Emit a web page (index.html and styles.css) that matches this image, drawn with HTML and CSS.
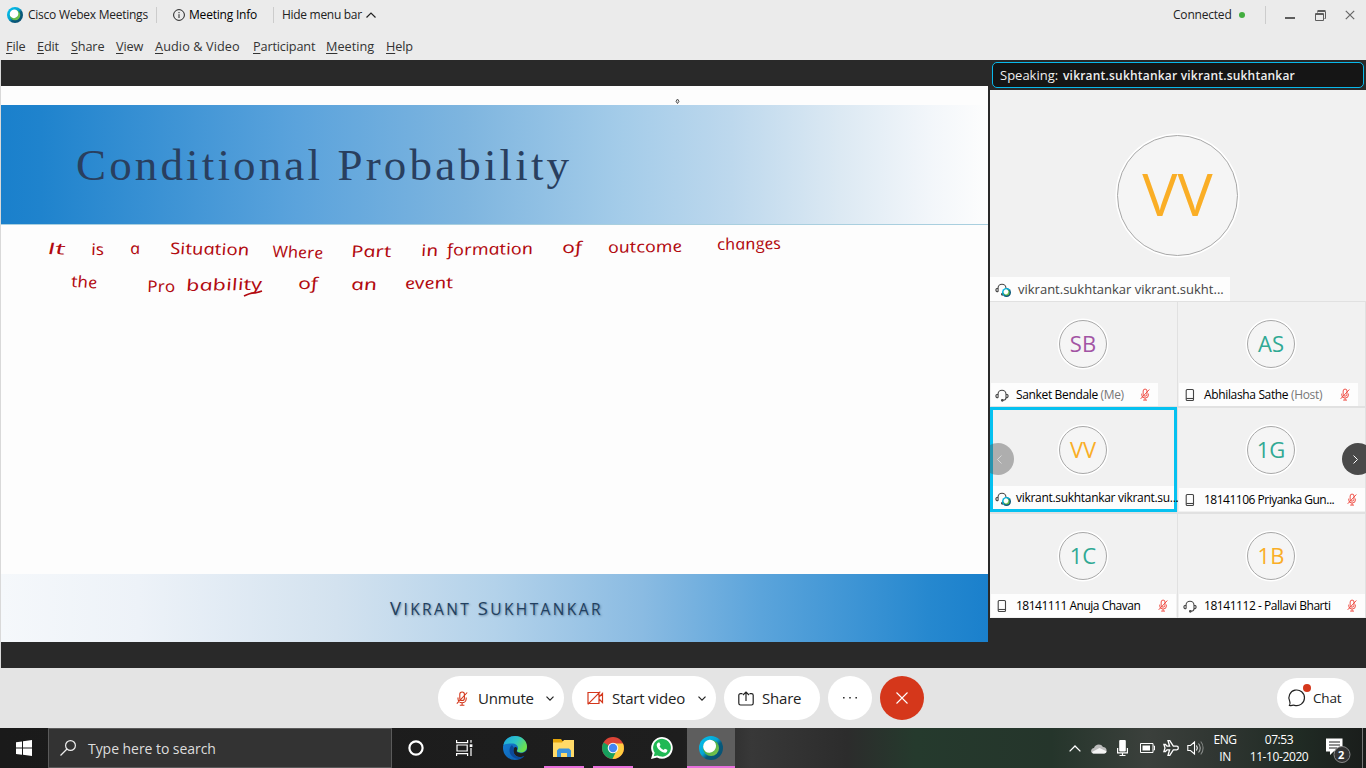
FILE: index.html
```html
<!DOCTYPE html>
<html lang="en">
<head>
<meta charset="utf-8">
<title>Cisco Webex Meetings</title>
<link rel="stylesheet" href="styles.css">
</head>
<body>
<svg class="defs" width="0" height="0" aria-hidden="true">
  <linearGradient id="ringA" x1="0" y1="0" x2="1" y2="1"><stop offset="0" stop-color="#00c4f2"/><stop offset=".45" stop-color="#07a5d3"/><stop offset=".6" stop-color="#075a7c"/><stop offset="1" stop-color="#0b4f70"/></linearGradient>
  <linearGradient id="ringB" x1="0" y1="0" x2="1" y2="1"><stop offset=".3" stop-color="#35a84a"/><stop offset="1" stop-color="#8ccb4b"/></linearGradient>
  <linearGradient id="edgeA" x1="0" y1="0" x2="1" y2=".5"><stop offset="0" stop-color="#1ba5e0"/><stop offset=".55" stop-color="#2fc4c6"/><stop offset="1" stop-color="#6be04e"/></linearGradient>
  <linearGradient id="edgeB" x1="0" y1="0" x2="1" y2="1"><stop offset="0" stop-color="#1683d8"/><stop offset="1" stop-color="#0b58a8"/></linearGradient>
  <symbol id="webex" viewBox="0 0 24 24"><circle cx="12" cy="12" r="12" fill="url(#ringA)"/><circle cx="12" cy="12" r="8" fill="url(#ringB)"/><ellipse cx="10.6" cy="10.2" rx="6.7" ry="6.3" transform="rotate(-48 10.6 10.2)" fill="#fff"/></symbol>
  <symbol id="mic-off" viewBox="0 0 12 15"><g fill="none" stroke="currentColor" stroke-width="1.1"><rect x="3.8" y="1" width="4.6" height="8.5" rx="2.3"/><path d="M2 6.5v1.2a4.1 4.1 0 0 0 8.200 0V6.500M6.100 12v2M3.800 14.200h4.600M.8 12.700 11.200 1.500"/></g></symbol>
  <symbol id="phone" viewBox="0 0 10 14"><g fill="none" stroke="currentColor" stroke-width="1.100"><rect x="1.200" y="1.500" width="7.300" height="11" rx="1"/><path d="M1.200 10.500h7.300"/></g></symbol>
  <symbol id="headset" viewBox="0 0 14 14"><g fill="none" stroke="currentColor" stroke-width="1.100"><path d="M3.100 9.800V6.300a3.900 3.900 0 0 1-.1 0 4 4 0 0 1 8 0v3.500M3 6.200C1.200 6.200.9 7.300.9 8s.4 1.800 2.100 1.800M11 6.200c1.800 0 2.100 1.100 2.100 1.800s-.4 1.800-2.100 1.800c0 1.500-1 2.500-3 2.500"/><circle cx="7.300" cy="12.300" r=".8" fill="currentColor"/></g></symbol>
</svg>

<header class="top">
  <div class="titlebar">
    <svg class="logo"><use href="#webex"/></svg>
    <span class="t-app">Cisco Webex Meetings</span>
    <i class="sep sep-a"></i>
    <svg class="info" viewBox="0 0 12 12" fill="none" stroke="#222"><circle cx="6" cy="6" r="5.400"/><path d="M6 5.200V9M6 3v1.200"/></svg>
    <span class="t-info">Meeting Info</span>
    <i class="sep sep-b"></i>
    <span class="t-hide">Hide menu bar</span>
    <svg class="caret" viewBox="0 0 10 6" fill="none" stroke="#222" stroke-width="1.200"><path d="m.5 5.500 4.500-4.500 4.500 4.500"/></svg>
    <div class="status"><span class="t-conn">Connected</span><i class="dot"></i><i class="sep sep-c"></i>
      <svg class="wmin" viewBox="0 0 10 2"><path d="M0 1h10" stroke="#5d5d5d" stroke-width="2"/></svg>
      <svg class="wmax" viewBox="0 0 11 11" fill="none" stroke="#5d5d5d"><path d="M.5 3.500h8v7h-8zM.5 4.500h8M2.500 2.500v-1h8v7h-1M2.500.5h8"/></svg>
      <svg class="wclose" viewBox="0 0 10 10" stroke="#666" stroke-width="1.200"><path d="m.8.8 8.400 8.400M9.200.8.8 9.200"/></svg>
    </div>
  </div>
  <nav class="menu">
    <span class="m1"><u>F</u>ile</span><span class="m2"><u>E</u>dit</span><span class="m3"><u>S</u>hare</span><span class="m4"><u>V</u>iew</span><span class="m5"><u>A</u>udio &amp; Video</span><span class="m6"><u>P</u>articipant</span><span class="m7"><u>M</u>eeting</span><span class="m8"><u>H</u>elp</span>
  </nav>
</header>

<main class="stage">
  <section class="slide">
    <div class="slide-top"><svg class="pointer" viewBox="0 0 5 7" fill="#ddd" stroke="#555"><path d="m2.500 1 1.500 2.300-1.500 2.300L1 3.300z"/></svg></div>
    <div class="banner"><h1>Conditional Probability</h1></div>
    <svg class="notes" viewBox="1 225 987 349">
      <text transform="translate(48 254) rotate(2) skewX(12)" textLength="18" lengthAdjust="spacingAndGlyphs">It</text>
      <text transform="translate(92 255) skewX(12)" textLength="13" lengthAdjust="spacingAndGlyphs">is</text>
      <text transform="translate(131 254) skewX(12)" textLength="10" lengthAdjust="spacingAndGlyphs">a</text>
      <text transform="translate(171 254) rotate(1) skewX(12)" textLength="79" lengthAdjust="spacingAndGlyphs">Situation</text>
      <text transform="translate(273 257) rotate(2) skewX(12)" textLength="51" lengthAdjust="spacingAndGlyphs">Where</text>
      <text transform="translate(352 257) skewX(12)" textLength="40" lengthAdjust="spacingAndGlyphs">Part</text>
      <text transform="translate(422 256) skewX(12)" textLength="17" lengthAdjust="spacingAndGlyphs">in</text>
      <text transform="translate(448 255.500) rotate(-1) skewX(12)" textLength="86" lengthAdjust="spacingAndGlyphs">formation</text>
      <text transform="translate(563 253) skewX(12)" textLength="20" lengthAdjust="spacingAndGlyphs">of</text>
      <text transform="translate(609 253) rotate(-1) skewX(12)" textLength="74" lengthAdjust="spacingAndGlyphs">outcome</text>
      <text transform="translate(718 250) rotate(-1) skewX(12)" textLength="64" lengthAdjust="spacingAndGlyphs">changes</text>
      <text transform="translate(72 287) rotate(3) skewX(12)" textLength="26" lengthAdjust="spacingAndGlyphs">the</text>
      <text transform="translate(148 292) skewX(12)" textLength="28" lengthAdjust="spacingAndGlyphs">Pro</text>
      <text transform="translate(187 291) rotate(-1) skewX(12)" textLength="76" lengthAdjust="spacingAndGlyphs">bability</text>
      <text transform="translate(299 289) skewX(12)" textLength="20" lengthAdjust="spacingAndGlyphs">of</text>
      <text transform="translate(352 290) skewX(12)" textLength="26" lengthAdjust="spacingAndGlyphs">an</text>
      <text transform="translate(406 289) rotate(-1) skewX(12)" textLength="48" lengthAdjust="spacingAndGlyphs">event</text>
      <path d="M244 296c4-2 6-3 10-3 2 0 5-1 8-2"/>
    </svg>
    <div class="footer"><b>V</b>ikrant&nbsp;<b>S</b>ukhtankar</div>
  </section>

  <aside class="people">
    <div class="speaking"><span class="sp-a">Speaking:</span><b>vikrant.sukhtankar vikrant.sukhtankar</b></div>
    <div class="main-tile">
      <div class="avatar big gold">VV</div>
      <div class="label main-label"><span class="dev"><svg class="hs"><use href="#headset"/></svg><svg class="badge"><use href="#webex"/></svg></span><span>vikrant.sukhtankar vikrant.sukht...</span></div>
    </div>
    <div class="grid">
      <div class="tile"><div class="avatar purple">SB</div><div class="label w168"><svg class="hs"><use href="#headset"/></svg><span class="n1">Sanket Bendale <em>(Me)</em></span><svg class="mic"><use href="#mic-off"/></svg></div></div>
      <div class="tile"><div class="avatar green">AS</div><div class="label w179"><svg class="ph"><use href="#phone"/></svg><span class="n2">Abhilasha Sathe <em>(Host)</em></span><svg class="mic"><use href="#mic-off"/></svg></div></div>
      <div class="tile active"><div class="avatar gold">VV</div><div class="label full"><span class="dev"><svg class="hs"><use href="#headset"/></svg><svg class="badge"><use href="#webex"/></svg></span><span class="n3">vikrant.sukhtankar vikrant.su...</span></div></div>
      <div class="tile"><div class="avatar green">1G</div><div class="label full"><svg class="ph"><use href="#phone"/></svg><span class="n4">18141106 Priyanka Gun...</span><svg class="mic"><use href="#mic-off"/></svg></div></div>
      <div class="tile"><div class="avatar green">1C</div><div class="label w185"><svg class="ph"><use href="#phone"/></svg><span class="n5">18141111 Anuja Chavan</span><svg class="mic"><use href="#mic-off"/></svg></div></div>
      <div class="tile"><div class="avatar gold">1B</div><div class="label full"><svg class="hs"><use href="#headset"/></svg><span class="n6">18141112 - Pallavi Bharti</span><svg class="mic"><use href="#mic-off"/></svg></div></div>
      <div class="arrow prev"><svg viewBox="0 0 5 9"><path d="M4.500.5.5 4.500l4 4"/></svg></div>
      <div class="arrow next"><svg viewBox="0 0 5 9"><path d="m.5.5 4 4-4 4"/></svg></div>
    </div>
  </aside>
</main>

<div class="controls">
  <div class="center">
    <div class="btn b-mute"><svg class="c-mic"><use href="#mic-off"/></svg><span>Unmute</span><svg class="down" viewBox="0 0 8 5"><path d="m.5.700 3.500 3.500 3.500-3.500"/></svg></div>
    <div class="btn b-video"><svg class="c-cam" viewBox="0 0 17 14" fill="none" stroke="#d4371c" stroke-width="1.200"><path d="M1 1.500h11v11H1zM12 6l3.500-3.500v9L12 8M.8 13.300 13.300.7"/></svg><span>Start video</span><svg class="down" viewBox="0 0 8 5"><path d="m.5.700 3.500 3.500 3.500-3.500"/></svg></div>
    <div class="btn b-share"><svg class="c-share" viewBox="0 0 16 15" fill="none" stroke="#222" stroke-width="1.200"><path d="M4.500 2.700h-2c-1 0-1.700.6-1.700 1.600v8c0 1 .7 1.700 1.700 1.700h11c1 0 1.700-.7 1.700-1.700v-8c0-1-.7-1.600-1.700-1.600h-2M8 10V1M5 4l3-3 3 3"/></svg><span>Share</span></div>
    <div class="btn round"><svg class="c-dots" viewBox="0 0 14 2"><path d="M0 0h1.600v1.600H0zM6.200 0h1.600v1.600H6.200zM12.400 0H14v1.600h-1.600z" fill="#333"/></svg></div>
    <div class="btn round leave"><svg class="c-x" viewBox="0 0 12 12" stroke="#fff" stroke-width="1.100"><path d="m.5.5 11 11M11.500.5l-11 11"/></svg></div>
  </div>
  <div class="btn b-chat"><svg class="c-chat" viewBox="0 0 18 18" fill="none" stroke="#222" stroke-width="1.200"><path d="M1.500 16.500c.8-1.300.8-2.700.2-4.200A7.800 7.800 0 1 1 6.500 16.300c-1.500-.4-3 .4-5 .2z"/></svg><span>Chat</span><i class="alert"></i></div>
</div>

<footer class="taskbar">
  <div class="start"><svg viewBox="0 0 16 16" fill="#fff"><path d="M0 2.200 6 1.400v6.200H0zM7 1.200 16 0v7.600H7zM0 8.500h6v6.200l-6-.8zM7 8.500h9V16l-9-1.200z"/></svg></div>
  <div class="search"><svg viewBox="0 0 16 16" fill="none" stroke="#eee" stroke-width="1.200"><circle cx="10.500" cy="5.500" r="4.900"/><path d="m7 9-6.500 6.500"/></svg><span>Type here to search</span></div>
  <div class="task cortana"><svg viewBox="0 0 16 16" fill="none" stroke="#fff" stroke-width="2.200"><circle cx="8" cy="8" r="6.600"/></svg></div>
  <div class="task view"><svg viewBox="0 0 17 16" fill="none" stroke="#fff" stroke-width="1.200"><path d="M.6 0v2.600h11V0M1 5h10.200v6H1zM.6 16v-2.400h11V16M15 0v2.800M15 8v8"/><path d="M13.700 4.300h2.700v2.700h-2.700z" fill="#fff" stroke="none"/></svg></div>
  <div class="task edge"><svg viewBox="0 0 24 24"><circle cx="12" cy="12" r="12" fill="url(#edgeB)"/><path d="M.4 9C1.600 3.500 6.500 0 12 0c7 0 12 5 12 10.500 0 4-3 6-6 6-2.300 0-4-.7-4-1.700 0-.7 1-1 1-2.800 0-2.500-2.500-4.500-6-4.500C5 7.500 1.500 8 .4 9z" fill="url(#edgeA)"/><path d="M11 12c-2 4 1 9 6 9 2 0 3.500-.5 5-1.300l2-2.700V14c-2 3-6.500 4-9.500 2.300C13 15 14.500 14.200 14 12c-.5-1.500-2-1.500-3 0z" fill="#1e1e1e"/><path d="M9 9c-4 3-3.500 11 4 13.500 3 1 6.500 0 8.500-2.500-7 3.500-13-1.500-10.500-8z" fill="#0c499a"/></svg></div>
  <div class="task on files"><svg viewBox="0 0 22 19"><path d="M0 0h8l1.500 2H21v16H0z" fill="#e5a50a"/><path d="M0 3.500h9L11 1h10v17H0z" fill="#ffda68"/><path d="M4 18v-6.500L6 9.500h10l2 2V18h-4v-4H8v4z" fill="#3a92dc"/></svg></div>
  <div class="task on chrome"><svg viewBox="0 0 22 22"><circle cx="11" cy="11" r="11" fill="#dc4437"/><path d="M11 11 1.500 5.500A11 11 0 0 0 10.500 22L16 13z" fill="#17a05d"/><path d="M11 11h4.800L10.500 22A11 11 0 0 0 21 6.500H11z" fill="#ffcd41"/><circle cx="11" cy="11" r="5.300" fill="#f5f5f5"/><circle cx="11" cy="11" r="4.200" fill="#4486f4"/></svg></div>
  <div class="task wa"><svg viewBox="0 0 22 22"><path d="M0 22l1.600-5.700A10.800 10.800 0 1 1 6 20.500z" fill="#fff"/><path d="M2.700 19.300l1-3.500A8.900 8.900 0 1 1 6.500 18.400z" fill="#20b954"/><path d="M7 5.800c.6-.6 1.400-.5 1.600 0l.9 2.200-.9 1.300c.9 1.700 2.200 2.900 4 3.800l1.300-1.400 2.300 1.100c.4.300 0 2.200-1 2.700-2.600 1.500-9.300-3-9.500-7.200 0-1 .6-1.900 1.300-2.500z" fill="#fff"/></svg></div>
  <div class="task current"><svg><use href="#webex"/></svg></div>
  <div class="tray">
    <svg class="i-up" viewBox="0 0 12 7" fill="none" stroke="#fff" stroke-width="1.300"><path d="m.6 6.400 5.400-5.400 5.400 5.400"/></svg>
    <svg class="i-cloud" viewBox="0 0 16 11"><path d="M2.500 10.500C-1 10-.5 5.500 3 5 4 1 10 0 12 4c4 0 5 5 1.500 6.500z" fill="#bcbcbc"/><path d="M1 9 8.500 5l7 3.200c0 1.300-1 2.300-2.500 2.300H3C1.900 10.500 1.300 9.800 1 9z" fill="#f4f4f4"/></svg>
    <svg class="i-mic" viewBox="0 0 11 16"><rect x="2.200" width="6.600" height="11.500" rx="1" fill="#fff"/><path d="M.6 8v4.800h9.800V8M5.500 13v2.500M2.500 15.500h6" fill="none" stroke="#fff" stroke-width="1.200"/></svg>
    <svg class="i-bat" viewBox="0 0 15 10"><path d="M.5.5h12.500v9H.5zM13.500 3h1v4h-1" fill="none" stroke="#fff"/><path d="M2.500 2.500H10v5H2.500z" fill="#fff"/></svg>
    <svg class="i-plane" viewBox="0 0 16 16" fill="none" stroke="#fff" stroke-width="1.300"><path d="M5 .7h1.800l3.500 5.500h3.500c2 0 2 3.600 0 3.600h-3.500l-3.500 5.500H5l1.600-5.500H4L2.500 11.500H.9L2 8 .9 4.500h1.600L4 6.200h2.600z"/></svg>
    <svg class="i-vol" viewBox="0 0 17 16" fill="none" stroke="#fff" stroke-width="1.100"><path d="M.8 5.500h2.700L7.500 2v12l-4-3.500H.8zM9.500 5.500c1 1.500 1 3.500 0 5"/><path d="M11.500 3.500c2.300 2.500 2.300 6.500 0 9" opacity=".6"/><path d="M13.700 1.500c3.200 3.500 3.200 9.500 0 13" opacity=".4"/></svg>
    <div class="lang"><span>ENG</span><span>IN</span></div>
    <div class="clock"><span class="time">07:53</span><span class="date">11-10-2020</span></div>
    <div class="notif"><svg viewBox="0 0 24 25"><path d="M0 .5h16.500v13H7.500L4 17v-3.500H0z" fill="#fff"/><path d="M3 4h11M3 7h11M3 10h8" stroke="#222"/><circle cx="16" cy="16.500" r="8" fill="#333" stroke="#8a8a8a"/></svg><b>2</b></div>
    <i class="peek"></i>
  </div>
</footer>
</body>
</html>
```
FILE: styles.css
```css
* { box-sizing: border-box; }
body { margin: 0; width: 1366px; height: 768px; overflow: hidden; display: flex; flex-direction: column; background: #292929; font-family: "Open Sans", "Noto Sans", sans-serif; font-size: 12px; color: #222; }
.defs { position: absolute; }
svg { display: block; flex: none; overflow: visible; }
span, b { white-space: nowrap; }

/* Window title and menu */
.top { height: 60px; background: #ebebeb; }
.titlebar { height: 30px; display: flex; align-items: center; padding-left: 7px; line-height: 16px; }
.logo { width: 16px; height: 16px; }
.t-app { margin-left: 5px; width: 121px; letter-spacing: -.25px; }
.sep { width: 1px; height: 16px; background: #ccc; flex: none; }
.sep-a { margin-left: 7px; }
.info { width: 12px; height: 12px; margin-left: 16px; }
.t-info { margin-left: 4px; width: 69px; color: #000; letter-spacing: -.2px; }
.sep-b { margin-left: 15px; }
.t-hide { margin-left: 8px; width: 80px; letter-spacing: -.3px; }
.caret { width: 10px; height: 6px; margin-left: 4px; }
.status { margin-left: auto; display: flex; align-items: center; padding-right: 11px; height: 28px; }
.t-conn { letter-spacing: -.2px; width: 59px; }
.dot { width: 6px; height: 6px; border-radius: 50%; background: #42ad3f; margin-left: 7px; }
.sep-c { margin-left: 20px; height: 18px; }
.wmin { width: 10px; height: 2px; margin: 5px 0 0 19px; }
.wmax { width: 11px; height: 11px; margin-left: 20px; }
.wclose { width: 10px; height: 10px; margin-left: 19px; }
.menu { display: flex; padding-left: 6px; height: 30px; line-height: 32px; color: #333; font-size: 12.700px; letter-spacing: -.15px; }
.menu u { text-underline-offset: 2px; }
.m1 { width: 31px; } .m2 { width: 34px; } .m3 { width: 45px; } .m4 { width: 39px; }
.m5 { width: 98px; letter-spacing: .1px; } .m6 { width: 73px; } .m7 { width: 60px; letter-spacing: 0; }

/* Shared slide */
.stage { height: 608px; display: flex; border-left: 1px solid #d9d9d9; }
.slide { width: 987px; margin-top: 26px; height: 556px; display: flex; flex-direction: column; background: #fdfdfd; }
.slide-top { height: 19px; padding: 12px 0 0 674px; }
.pointer { width: 5px; height: 7px; }
.banner { height: 120px; border-bottom: 1px solid #a9cfdf; background: linear-gradient(90deg, #1a80cc 0, #1f83cd 4%, #5ba3dc 30%, #7eb5df 47%, #a4cce9 63%, #bdd8ed 74%, #dce9f3 85%, #f2f6fa 94%, #fdfdfd); }
h1 { margin: 0; padding: 32px 0 0 75px; font: 400 45px/56px "Liberation Serif", serif; letter-spacing: 3.150px; color: #293f5f; white-space: nowrap; }
.notes { width: 987px; height: 349px; }
.notes text { font: italic 500 16px "Open Sans", sans-serif; fill: #b20a10; }
.notes path { fill: none; stroke: #b20a10; stroke-width: 1.700; }
.footer { height: 68px; padding: 23px 0 0 389px; line-height: 22px; color: #22405f; font-size: 15.500px; text-transform: uppercase; white-space: nowrap; letter-spacing: 2.400px; text-shadow: 1px 1px 2px rgba(40, 70, 100, .5); background: linear-gradient(90deg, #f5f8fb 0, #edf2f8 14%, #d3e2ef 34%, #b3d2ea 50%, #8abbe2 65%, #5ba4db 77%, #2688cf 94%, #1a80cc); }
.footer b { font-size: 18.500px; font-weight: 400; }

/* Participants */
.people { margin-left: 2px; width: 376px; }
.speaking { height: 26px; margin: 2px 2px 2px 2px; border: 1px solid #09b8ea; border-radius: 5px; background: #151515; color: #eee; display: flex; align-items: center; padding-left: 7px; }
.sp-a { width: 63px; font-size: 13px; }
.speaking b { font-weight: 600; font-size: 12px; letter-spacing: .2px; }
.main-tile { height: 211px; background: #f1f1f1; display: flex; flex-direction: column; align-items: center; justify-content: space-between; padding: 45px 1px 0 0; }
.avatar { width: 48px; height: 48px; flex: none; border: 1px solid #a8a8a8; border-radius: 50%; background: #f5f5f5; box-shadow: 0 0 0 1.500px #fff; display: flex; align-items: center; justify-content: center; font-size: 22px; line-height: 30px; padding-bottom: 2px; }
.big { width: 121px; height: 121px; font-size: 59px; line-height: 60px; padding-bottom: 5px; }
.gold { color: #faae26; } .purple { color: #a254a4; } .green { color: #30a994; }
.label { height: 23px; display: flex; align-items: center; background: #fdfdfd; align-self: flex-start; color: #000; padding-left: 5px; letter-spacing: -.35px; }
.label svg { color: #444; }
.label .mic { color: #ef4238; width: 10px; height: 13px; margin-left: auto; }
.label span:not(.dev) { margin-left: 7px; }
.label em { font-style: normal; color: #777; }
.hs { width: 14px; height: 14px; }
.ph { width: 10px; height: 14px; margin: 0 2px; }
.dev { position: relative; width: 14px; height: 14px; }
.badge { position: absolute; left: 7px; top: 6px; width: 9px; height: 9px; }
.main-label { width: 240px; height: 24px; font-size: 13px; color: #444; letter-spacing: 0; }
.main-label span:not(.dev) { margin-left: 9px; }
.label .n3 { letter-spacing: -.3px; }
.label .n4, .label .n5 { letter-spacing: -.5px; }
.label .n6 { letter-spacing: -.45px; }
.grid { position: relative; overflow: hidden; height: 317px; display: grid; grid-template-columns: 187px 187px; grid-template-rows: 104px 104px 104px; gap: 2px 1px; padding: 1px 1px 0 0; background: #e1e1e1; }
.tile { background: #f1f1f1; display: flex; flex-direction: column; align-items: center; justify-content: space-between; padding-top: 18px; }
.tile .avatar { margin-left: -1px; }
.tile .label { padding-right: 8px; padding-left: 4px; margin-left: 1px; }
.tile:nth-child(n+3) .label { margin-bottom: 1px; }
.active { border: 3px solid #06c1f0; margin: -1px 0 0 0; padding-top: 16px; }
.tile.active .label { margin: 0; padding: 0; }
.active .label .dev { margin-left: 2px; }
.w168 { width: 167px; } .w179 { width: 179px; } .w185 { width: 185px; }
.label.full { align-self: stretch; }
.arrow { position: absolute; top: 142px; width: 32px; height: 32px; display: flex; align-items: center; }
.arrow svg { width: 5px; height: 9px; fill: none; stroke: #fff; }
.prev { left: -8px; background: rgba(85, 85, 85, .43); border-radius: 16px; padding-left: 15px; }
.prev svg { opacity: .5; }
.next { left: 352px; background: #4a4a4a; border-radius: 16px; padding-left: 11px; }

/* Meeting controls */
.controls { height: 60px; background: #e4e4e4; position: relative; display: flex; align-items: center; padding: 0 12px 0 438px; justify-content: space-between; font-size: 15px; }
.center { display: flex; gap: 8px; }
.btn { height: 44px; border-radius: 22px; background: #fff; display: flex; align-items: center; letter-spacing: -.2px; color: #222; }
.down { width: 8px; height: 5px; fill: none; stroke: #222; stroke-width: 1.200; }
.b-mute { width: 126px; padding-left: 18px; }
.c-mic { width: 12px; height: 15px; color: #d4371c; }
.b-mute span { margin-left: 10px; width: 68px; }
.b-video { width: 144px; padding-left: 15px; }
.c-cam { width: 17px; height: 14px; }
.b-video span { margin-left: 8px; width: 86px; }
.b-share { width: 96px; padding-left: 14px; }
.c-share { width: 16px; height: 15px; }
.b-share span { margin-left: 8px; }
.round { width: 44px; justify-content: center; }
.leave { background: #d5371b; }
.c-dots { width: 14px; height: 2px; }
.c-x { width: 12px; height: 12px; }
.b-chat { position: relative; width: 77px; height: 40px; padding-left: 11px; font-size: 13.500px; }
.c-chat { width: 18px; height: 18px; }
.b-chat span { margin-left: 7px; }
.alert { position: absolute; left: 26px; top: 6px; width: 8px; height: 8px; border-radius: 50%; background: #d5371b; }

/* Taskbar */
.taskbar { height: 40px; display: flex; color: #fff; background: linear-gradient(90deg, #1a1a1a 0, #1e1e1e 50%, #383838 55%, #2c2c2c 62%, #253a2d 67%, #25352b 77%, #3b403c 84%, #303632 89%, #202b24 95%, #1a1d1b); }
.start { width: 48px; display: flex; align-items: center; justify-content: center; }
.start svg { width: 16px; height: 16px; }
.search { width: 344px; border: 1px solid #5a5a5a; background: #333; display: flex; align-items: center; padding-left: 11px; font-size: 14px; color: #ddd; }
.search svg { width: 16px; height: 16px; }
.search span { margin-left: 12px; letter-spacing: -.05px; }
.task { width: 40px; display: flex; align-items: center; justify-content: center; }
.task.on { border-bottom: 2px solid #e76fdc; padding-top: 2px; }
.cortana { width: 48px; } .cortana svg { width: 16px; height: 16px; }
.view { width: 48px; } .view svg { width: 17px; height: 16px; }
.edge { width: 54px; } .edge svg { width: 24px; height: 24px; }
.files { margin-left: 2px; } .files svg { width: 22px; height: 19px; }
.chrome { margin-left: 9px; } .chrome svg { width: 22px; height: 22px; }
.wa { margin-left: 9px; } .wa svg { width: 22px; height: 22px; }
.current { width: 48px; margin-left: 5px; background: #5e5e5e; border-bottom: 2px solid #e76fdc; padding-top: 2px; }
.current svg { width: 24px; height: 24px; }
.tray { margin-left: auto; display: flex; align-items: center; }
.i-up { width: 12px; height: 7px; }
.i-cloud { width: 16px; height: 11px; margin-left: 10px; }
.i-mic { width: 11px; height: 16px; margin-left: 10px; }
.i-bat { width: 15px; height: 10px; margin-left: 12px; }
.i-plane { width: 16px; height: 16px; margin-left: 8px; }
.i-vol { width: 17px; height: 16px; margin-left: 8px; }
.lang, .clock { display: flex; flex-direction: column; align-items: center; line-height: 17px; letter-spacing: -.4px; }
.lang { width: 24px; margin-left: 9px; }
.clock { width: 60px; margin-left: 12px; }
.notif { position: relative; margin: 4px 0 0 17px; }
.notif svg { width: 24px; height: 25px; }
.notif b { position: absolute; left: 12px; top: 9px; font-size: 11px; line-height: 15px; }
.peek { width: 1px; height: 40px; background: #777; margin: 0 3px 0 12px; }
```
